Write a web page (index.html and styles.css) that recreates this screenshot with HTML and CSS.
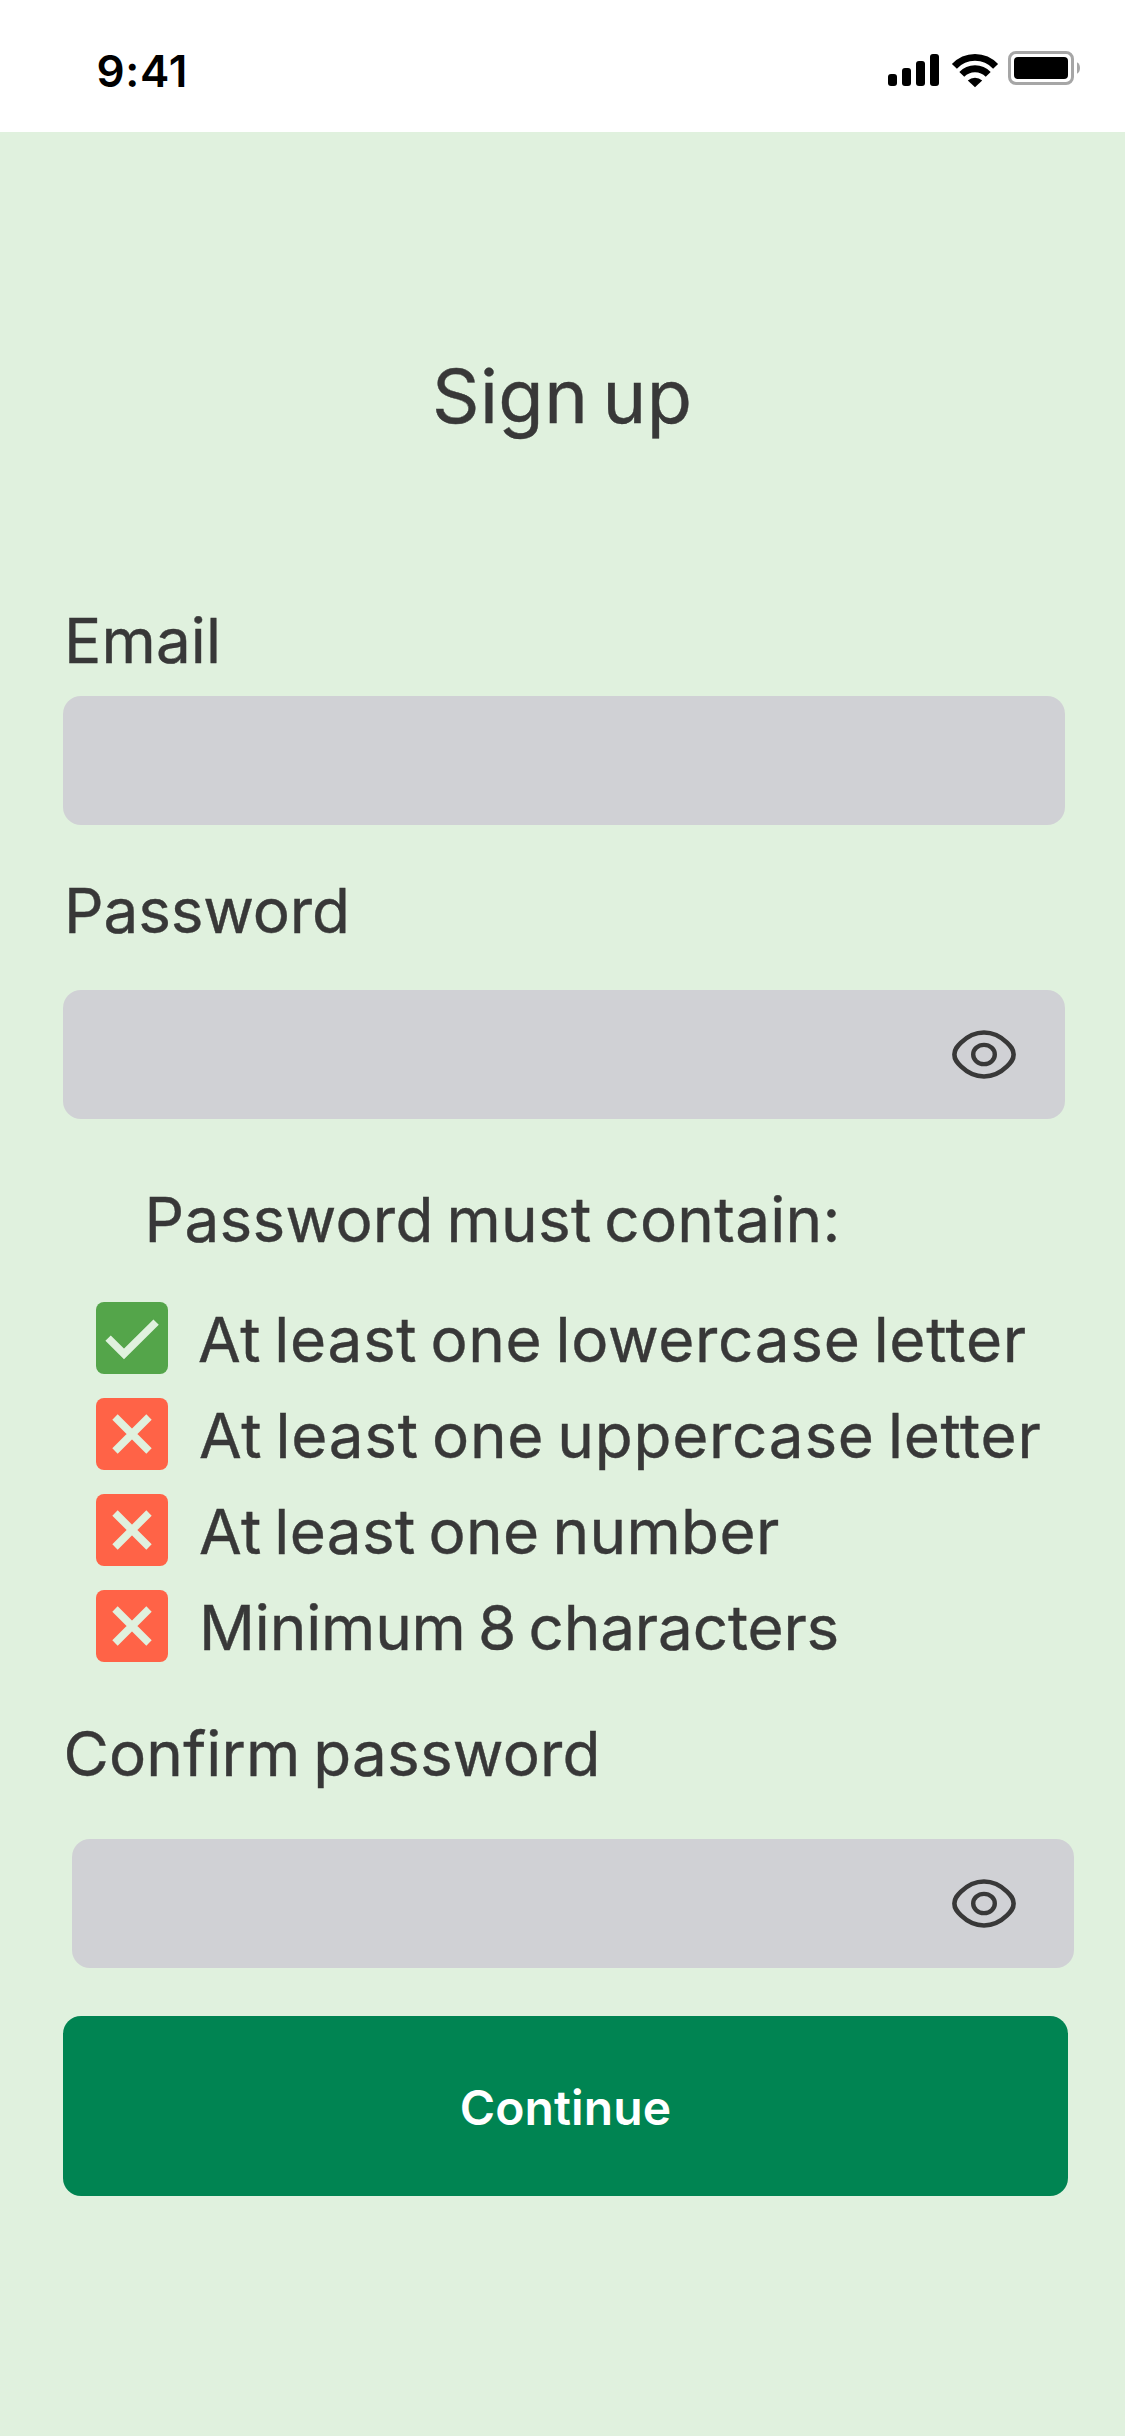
FILE: index.html
```
<!DOCTYPE html>
<html lang="en">
<head>
  <meta charset="utf-8">
  <title>Sign up</title>
  <link rel="stylesheet" href="styles.css">
</head>
<body>
  <svg class="defs" width="0" height="0" aria-hidden="true">
    <symbol id="eye" viewBox="0 0 64 49">
      <path d="M32 2.5C41 2.5 49 6.8 55 12.6C58.8 16.3 61.6 19.2 61.6 24.5C61.6 29.8 58.8 32.7 55 36.4C49 42.2 41 46.5 32 46.5C23 46.5 15 42.2 9 36.4C5.2 32.7 2.4 29.8 2.4 24.5C2.4 19.2 5.2 16.3 9 12.6C15 6.8 23 2.5 32 2.5Z" fill="none" stroke="currentColor" stroke-width="4.6"/>
      <ellipse cx="32" cy="24.5" rx="10.8" ry="9.6" fill="none" stroke="currentColor" stroke-width="4.4"/>
    </symbol>
    <symbol id="check" viewBox="0 0 72 72">
      <path d="M12.1 36.1L28 52L60.1 20.1" fill="none" stroke="currentColor" stroke-width="7.6"/>
    </symbol>
    <symbol id="cross" viewBox="0 0 72 72">
      <path d="M19 19L53 53M53 19L19 53" fill="none" stroke="currentColor" stroke-width="7.6"/>
    </symbol>
  </svg>

  <header class="status">
    <span class="time">9:41</span>
    <svg class="indicators" width="192" height="37" viewBox="0 0 192 37">
      <rect x="0" y="23" width="9" height="12" rx="3"/>
      <rect x="14" y="17" width="9" height="18" rx="3"/>
      <rect x="28" y="10" width="9" height="25" rx="3"/>
      <rect x="42" y="3" width="9" height="32" rx="3"/>
      <path d="M66.4 15.4A28 28 0 0 1 107.6 15.4M73.8 23.4A18.2 18.2 0 0 1 100.2 23.4" fill="none" stroke="#000" stroke-width="6.8"/>
      <path d="M79.8 29.4A11 11 0 0 1 94.2 29.4L87 36.3Z"/>
      <rect x="121.5" y="1.5" width="63" height="31" rx="6.5" fill="none" stroke="#a6a6a6" stroke-width="3"/>
      <rect x="126" y="6" width="54" height="22" rx="4"/>
      <path d="M189 11.2Q192 13 192 17T189 22.8Z" fill="#a6a6a6"/>
    </svg>
  </header>

  <main class="screen">
    <h1 class="title">Sign up</h1>

    <label class="label label-email" for="email">Email</label>
    <div class="field"><input class="input" id="email" type="email"></div>

    <label class="label label-password" for="password">Password</label>
    <div class="field field-password">
      <input class="input" id="password" type="password">
      <svg class="eye"><use href="#eye"/></svg>
    </div>

    <h2 class="rules-title">Password must contain:</h2>
    <ul class="rules">
      <li class="rule"><svg class="mark mark-ok"><use href="#check"/></svg><span class="rule-text first">At least one lowercase letter</span></li>
      <li class="rule"><svg class="mark"><use href="#cross"/></svg><span class="rule-text">At least one uppercase letter</span></li>
      <li class="rule"><svg class="mark"><use href="#cross"/></svg><span class="rule-text number">At least one number</span></li>
      <li class="rule"><svg class="mark"><use href="#cross"/></svg><span class="rule-text length">Minimum 8 characters</span></li>
    </ul>

    <label class="label label-confirm" for="confirm">Confirm password</label>
    <div class="field field-confirm">
      <input class="input" id="confirm" type="password">
      <svg class="eye"><use href="#eye"/></svg>
    </div>

    <button class="continue" type="button">Continue</button>
  </main>
</body>
</html>
```
FILE: styles.css
```
* { box-sizing: border-box; }

body {
  margin: 0;
  background: #e0f1de;
  color: #383838;
  font-family: Inter, "Liberation Sans", sans-serif;
  font-weight: 400;
}

.defs { display: block; height: 0; }

.status {
  display: flex;
  justify-content: space-between;
  align-items: flex-start;
  height: 132px;
  padding: 51px 45px 0 96.5px;
  background: #fff;
  color: #000;
}

.time {
  font-size: 44px;
  font-weight: 600;
  line-height: 40px;
  letter-spacing: 0.7px;
}

.screen {
  display: flex;
  flex-direction: column;
  align-items: flex-start;
  min-height: 2304px;
  padding: 219px 57px 0 63px;
}

.title,
.label,
.rules-title,
.rule-text {
  -webkit-text-stroke: 0.4px currentColor;
}

.title {
  margin: 0 0 162px 369px;
  font-size: 74px;
  font-weight: 400;
  line-height: 90px;
  letter-spacing: 0.45px;
  word-spacing: -7px;
}

.label {
  font-size: 62px;
  line-height: 76px;
  padding-left: 1px;
  word-spacing: -5px;
}

.label-email { margin-bottom: 17px; letter-spacing: 0.15px; }
.label-password { margin: 48px 0 41px; letter-spacing: -0.14px; }
.label-confirm { margin: 54px 0 47px; padding-left: 0.5px; letter-spacing: 0.2px; }

.field {
  display: flex;
  align-items: center;
  width: 1002px;
  height: 129px;
  padding-right: 49px;
  border-radius: 18px;
  background: #d0d1d5;
}

.field-confirm { margin-left: 9px; padding-right: 58px; }

.input {
  flex: 1;
  align-self: stretch;
  min-width: 0;
  padding: 0 24px;
  border: 0;
  outline: 0;
  background: transparent;
  color: inherit;
  font: inherit;
  font-size: 62px;
}

.eye { width: 64px; height: 49px; }

.rules-title {
  margin: 63px 0 44px 81.5px;
  font-size: 62px;
  font-weight: 400;
  line-height: 76px;
  letter-spacing: 0.28px;
  word-spacing: -5px;
}

.rules {
  display: flex;
  flex-direction: column;
  gap: 24px;
  margin: 0 0 0 33px;
  padding: 0;
  list-style: none;
}

.rule {
  display: flex;
  align-items: center;
  gap: 31px;
  height: 72px;
}

.mark {
  width: 72px;
  height: 72px;
  border-radius: 8px;
  background: #ff6347;
  color: #e0f1de;
}

.mark-ok { background: #54a54a; }

.rule-text {
  padding-top: 3px;
  font-size: 62px;
  line-height: 76px;
  white-space: nowrap;
  letter-spacing: 0.74px;
  word-spacing: -5px;
}

.first { margin-left: -1px; letter-spacing: 0.68px; }
.number { letter-spacing: 0.36px; }
.length { letter-spacing: -0.17px; }

.continue {
  width: 1005px;
  height: 180px;
  margin-top: 48px;
  padding: 3px 0 0;
  border: 0;
  border-radius: 18px;
  background: #008452;
  color: #fff;
  font-family: inherit;
  font-size: 48px;
  font-weight: 600;
  letter-spacing: 0.1px;
}
```
